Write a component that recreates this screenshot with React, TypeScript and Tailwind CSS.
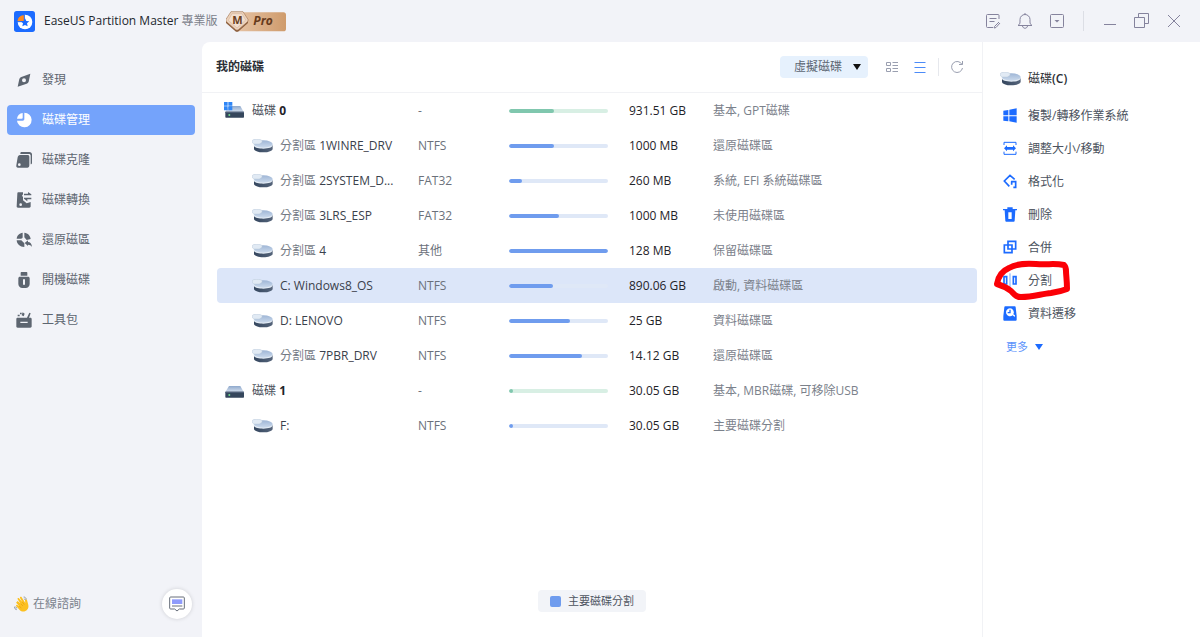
import { useState } from 'react';
import type { ReactNode } from 'react';
import clsx from 'clsx';

/* Disk icons */

function PartitionIcon() {
  return (
    <svg viewBox="0 0 63 42" className="h-[14px] w-[21px] shrink-0" aria-hidden="true">
      <defs>
        <linearGradient id="partTop" x1="0" y1="0" x2="0" y2="1">
          <stop offset="0" stopColor="#9fb6d6" />
          <stop offset="1" stopColor="#cbdaec" />
        </linearGradient>
        <linearGradient id="partSide" x1="0" y1="0" x2="1" y2="0">
          <stop offset="0" stopColor="#34465e" />
          <stop offset="1" stopColor="#56657b" />
        </linearGradient>
      </defs>
      <path d="M6 18v11c0 6 12 11 28 11s28-5 28-11V18z" fill="url(#partSide)" />
      <path d="M5 15v4c0 6 13 10 29 10s28-4 28-10v-4z" fill="#e4ecf5" />
      <ellipse cx="34" cy="15" rx="28" ry="11" fill="url(#partTop)" />
      <path d="M1 5c0-3 6-4 13-4s16 1 16 4v5l-8 5H6l-5-4z" fill="#e1eaf4" stroke="#b9c8da" strokeWidth="1.5" />
    </svg>
  );
}

function DriveIcon({ system }: { system?: boolean }) {
  return (
    <svg viewBox="0 0 60 54" className="h-[18px] w-5 shrink-0" aria-hidden="true">
      <defs>
        <linearGradient id="driveTop" x1="0" y1="0" x2="0" y2="1">
          <stop offset="0" stopColor="#8fa9cd" />
          <stop offset="1" stopColor="#d5e0ee" />
        </linearGradient>
      </defs>
      <path d="M15 12h34l10 18H4z" fill="url(#driveTop)" />
      <rect x="4" y="29" width="56" height="18" rx="2" fill="#35465c" />
      <rect x="4" y="29" width="56" height="3" fill="#5a6b83" />
      <circle cx="16" cy="39" r="3" fill="#6fdc8c" />
      {system && <path d="M0 0h11v11H0zM13 0h12v11H13zM0 13h11v12H0zM13 13h12v12H13z" fill="#2f86f6" />}
    </svg>
  );
}

/* Sidebar */

function NavIcon({ children }: { children: ReactNode }) {
  return (
    <svg viewBox="0 0 48 48" className="h-4 w-4 shrink-0" fill="currentColor" aria-hidden="true">
      {children}
    </svg>
  );
}

const navItems = [
  {
    label: '發現',
    icon: (
      <path
        fillRule="evenodd"
        d="M43 5 38 29c-1 3-3 5-6 6L5 44l5-23c1-3 3-5 6-6zM24 19a6 6 0 1 0 0 12 6 6 0 0 0 0-12z"
      />
    ),
  },
  {
    label: '磁碟管理',
    icon: (
      <>
        <path d="M25 2a22 22 0 1 1-22 24h17c3 0 5-2 5-5z" />
        <path d="M20 3v14c0 2-1 3-3 3H3C4 11 11 4 20 3z" />
      </>
    ),
  },
  {
    label: '磁碟克隆',
    icon: (
      <>
        <path d="M16 0h24c5 0 8 3 8 7v26c0 2-2 4-4 4V11c0-3-2-5-5-5H13c0-4 1-6 3-6z" />
        <path
          fillRule="evenodd"
          d="M12 9h22c4 0 6 2 6 6v25c0 4-2 7-6 7H6c-4 0-6-3-5-7l4-24c1-4 3-7 7-7zM10 34a4 4 0 1 0 0 8 4 4 0 0 0 0-8z"
        />
      </>
    ),
  },
  {
    label: '磁碟轉換',
    icon: (
      <>
        <path
          fillRule="evenodd"
          d="M8 1h13v6l-3 4 3 4v10l11 9 12-4v13c0 3-2 4-4 4H6c-3 0-4-1-4-4L4 5c0-3 1-4 4-4zM14 34a4 4 0 1 0 0 8 4 4 0 0 0 0-8z"
        />
        <path d="M24 5h12V0l10 7v3H24zM46 17H24v3l10 8v-6h12z" />
      </>
    ),
  },
  {
    label: '還原磁區',
    icon: (
      <>
        <path d="M20 2v13c0 3-2 5-5 5H2C3 11 10 3 20 2zM25 2c11 1 18 9 19 19l-12 3-7-8zM2 25h14l9 9v11C12 45 3 37 2 25z" />
        <path d="m26 33 10-8v5c7 0 11 5 12 15-3-5-7-7-12-7v4z" />
      </>
    ),
  },
  {
    label: '開機磁碟',
    icon: (
      <path
        fillRule="evenodd"
        d="M16 0h16c1 0 2 1 2 2v9H14V2c0-1 1-2 2-2zM12 14h24c3 0 5 2 5 5v17c0 7-5 12-12 12H19C12 48 7 43 7 36V19c0-3 2-5 5-5zm9 8v16h6V22z"
      />
    ),
  },
  {
    label: '工具包',
    icon: (
      <>
        <path
          fillRule="evenodd"
          d="M5 17h28l7-15 4 2-5 13h4c3 0 4 2 4 4v22c0 3-2 4-4 4H5c-3 0-4-1-4-4V21c0-2 1-4 4-4zm8 12v4h22v-4z"
        />
        <path d="M5 8h6v5H5zM12 2h5v5h-5zM20 1l6 4-3 8-6-3z" />
      </>
    ),
  },
];

function Sidebar() {
  const [active, setActive] = useState('磁碟管理');

  return (
    <aside className="flex w-[202px] shrink-0 flex-col justify-between">
      <nav className="flex flex-col gap-2.5 px-[7px] pt-[23px]">
        {navItems.map((item) => (
          <button
            key={item.label}
            onClick={() => setActive(item.label)}
            className={clsx(
              'flex h-[30px] items-center gap-2.5 rounded-[4px] px-[9px]',
              active === item.label ? 'bg-[#74a3fb] text-white' : 'text-[#5d6570]',
            )}
          >
            <NavIcon>{item.icon}</NavIcon>
            <span>{item.label}</span>
          </button>
        ))}
      </nav>

      <div className="flex items-center justify-between pr-2.5 pb-[18px] pl-3.5">
        <a href="#support" className="flex items-center gap-[3px] text-[#7b828d]">
          <svg viewBox="0 0 48 48" className="h-4 w-4" aria-hidden="true">
            <path
              d="m8 18 3-3 9 8-9-13c-2-3 2-6 4-3l10 11-7-12c-1-3 3-5 5-2l11 17-1-8c0-4 5-5 6-1l4 15c2 8-2 16-10 19-6 2-12 0-16-4L7 31c-3-3 1-6 3-4l6 4L7 21c-1-1 0-2 1-3z"
              fill="#fcc021"
            />
            <path d="m20 23 7 7m-2-12 6 8m-15 5 6 5" stroke="#e59d0c" strokeWidth="2" fill="none" />
            <path d="M29 3c4 0 7 3 8 7M31 8l3 4M1 32c0 5 3 8 7 9M5 32l3 5" stroke="#8d949e" strokeWidth="3" fill="none" />
          </svg>
          在線諮詢
        </a>
        <button
          aria-label="聊天"
          className="flex h-[30px] w-[30px] items-center justify-center rounded-full bg-white shadow-[0_0_4px_rgba(0,0,0,0.15)]"
        >
          <svg viewBox="0 0 48 48" className="h-4 w-4" fill="none" aria-hidden="true">
            <rect x="9" y="10" width="31" height="14" fill="#8f9bfb" />
            <path
              d="M5 3h38c2 0 3 1 3 3v30c0 2-1 3-3 3H31l-7 6-7-6H5c-2 0-3-1-3-3V6c0-2 1-3 3-3zM9 30h31"
              stroke="#686f7b"
              strokeWidth="3"
            />
          </svg>
        </button>
      </div>
    </aside>
  );
}

/* Title bar */

function WindowButton({ label, children }: { label: string; children: ReactNode }) {
  return (
    <button aria-label={label} className="flex h-6 w-8 items-center justify-center">
      <svg viewBox="0 0 16 16" className="h-4 w-4" fill="none" stroke="#85839d" aria-hidden="true">
        {children}
      </svg>
    </button>
  );
}

function TitleBar() {
  return (
    <header className="flex h-[42px] shrink-0 items-center justify-between pr-2.5 pl-3.5">
      <div className="flex items-center">
        <svg viewBox="0 0 63 63" className="h-[21px] w-[21px]" aria-hidden="true">
          <rect width="63" height="63" rx="8" fill="#1c6bff" />
          <circle cx="33" cy="33" r="22" fill="#fff" />
          <path d="M31 32H9c0-12 10-21 22-21z" fill="#ff8a1e" stroke="#1c6bff" strokeWidth="3" />
          <path d="m33 22 4 8 9 1-7 6 2 9-8-4-8 4 2-9-7-6 9-1z" fill="#1c6bff" />
        </svg>
        <h1 className="ml-[9px] font-medium text-[#23272e]">
          EaseUS Partition Master <span className="font-normal text-[#7b808a]">專業版</span>
        </h1>
        <div className="ml-2 flex items-center" aria-label="Pro">
          <svg viewBox="0 0 180 63" className="h-[21px] w-[60px]" aria-hidden="true">
            <defs>
              <linearGradient id="badge" x1="0" y1="0" x2="1" y2="0">
                <stop offset="0" stopColor="#e6c3a5" />
                <stop offset="1" stopColor="#cf9b6c" />
              </linearGradient>
            </defs>
            <path d="M30 4h143c4 0 7 3 7 7v43c0 4-3 7-7 7H30z" fill="url(#badge)" />
            <path d="M16 8h34l16 21v7L36 62h-6L0 36v-7z" fill="#8a5c3c" />
            <path d="M15 2h36l15 23v6L36 57h-6L0 31v-6z" fill="#ecd2bd" stroke="#a77b59" strokeWidth="2" />
            <path d="M18 8h30l11 19-26 24L7 28z" fill="#f3dfcf" stroke="#c49a79" strokeWidth="1" />
            <text x="34" y="38" textAnchor="middle" fontSize="33" fontWeight="700" fill="#6b3f22">
              M
            </text>
            <text x="82" y="43" fontSize="36" fontWeight="700" fontStyle="italic" fill="#663b1d">
              Pro
            </text>
          </svg>
        </div>
      </div>

      <div className="flex items-center">
        <WindowButton label="意見">
          <path d="M14 6V2.500a1 1 0 0 0-1-1H2.500a1 1 0 0 0-1 1v11a1 1 0 0 0 1 1H8M4.500 5.500h7M4.500 8.500h5" />
          <path d="m14 9-4.500 4.500-.5 1.500 2-.5L15 10" />
        </WindowButton>
        <WindowButton label="通知">
          <path d="M1 12.500h14c-1.500-1-2-2-2-3.500V6.500a5 5 0 0 0-10 0V9c0 1.500-.5 2.500-2 3.500zM8 1.500V0M5.500 13c.5 3 4.500 3 5 0" />
        </WindowButton>
        <WindowButton label="選單">
          <rect x="1.500" y="1.500" width="13" height="13" rx="1" />
          <path d="M5.500 7h5L8 9.500z" fill="#85839d" stroke="none" />
        </WindowButton>
        <span className="mx-2.5 h-5 w-px bg-[#dcdee5]" />
        <WindowButton label="最小化">
          <path d="M2 11.500h12" />
        </WindowButton>
        <WindowButton label="還原視窗">
          <path d="M.5 4.500h10v10H.5zM4.500 4V.5h10v10H11" />
        </WindowButton>
        <WindowButton label="關閉">
          <path d="m2 2 12 12M14 2 2 14" />
        </WindowButton>
      </div>
    </header>
  );
}

/* Disk list */

type Row = {
  disk?: boolean;
  system?: boolean;
  selected?: boolean;
  cjk?: string;
  name: string;
  fs: string;
  used: number;
  size: string;
  note: string;
};

const rows: Row[] = [
  { disk: true, system: true, cjk: '磁碟', name: '0', fs: '-', used: 45, size: '931.51 GB', note: '基本, GPT磁碟' },
  { cjk: '分割區', name: '1WINRE_DRV', fs: 'NTFS', used: 45, size: '1000 MB', note: '還原磁碟區' },
  { cjk: '分割區', name: '2SYSTEM_D...', fs: 'FAT32', used: 13, size: '260 MB', note: '系統, EFI 系統磁碟區' },
  { cjk: '分割區', name: '3LRS_ESP', fs: 'FAT32', used: 50, size: '1000 MB', note: '未使用磁碟區' },
  { cjk: '分割區', name: '4', fs: '其他', used: 100, size: '128 MB', note: '保留磁碟區' },
  { name: 'C: Windows8_OS', fs: 'NTFS', used: 44, size: '890.06 GB', note: '啟動, 資料磁碟區', selected: true },
  { name: 'D: LENOVO', fs: 'NTFS', used: 62, size: '25 GB', note: '資料磁碟區' },
  { cjk: '分割區', name: '7PBR_DRV', fs: 'NTFS', used: 74, size: '14.12 GB', note: '還原磁碟區' },
  { disk: true, cjk: '磁碟', name: '1', fs: '-', used: 4, size: '30.05 GB', note: '基本, MBR磁碟, 可移除USB' },
  { name: 'F:', fs: 'NTFS', used: 4, size: '30.05 GB', note: '主要磁碟分割' },
];

function UsageBar({ used, disk }: { used: number; disk?: boolean }) {
  return (
    <div className={clsx('h-1 w-[99px] overflow-hidden rounded-full', disk ? 'bg-[#d8efe4]' : 'bg-[#dfe8f7]')}>
      <div
        className={clsx('h-full rounded-full', disk ? 'bg-[#80c7ae]' : 'bg-[#6f9cee]')}
        style={{ width: `${used}%` }}
      />
    </div>
  );
}

function DiskList() {
  return (
    <main className="flex min-w-0 flex-1 flex-col rounded-tl-lg bg-white">
      <div className="flex h-[51px] items-center justify-between border-b border-[#f1f2f5] pr-[18px] pl-3.5">
        <h2 className="font-semibold text-[#2b2f36]">我的磁碟</h2>
        <div className="flex items-center">
          <div className="relative mr-[17px]">
            <select
              aria-label="磁碟類型"
              className="h-[22px] w-[88px] appearance-none rounded-[4px] bg-[#e6f1fd] pl-3.5 text-[#5c6672]"
            >
              <option>虛擬磁碟</option>
            </select>
            <svg viewBox="0 0 8 6" className="pointer-events-none absolute top-2 right-[7px] h-1.5 w-2" aria-hidden="true">
              <path d="M0 0h8L4 6z" fill="#111" />
            </svg>
          </div>
          <button aria-label="詳細檢視" className="flex h-[22px] w-[14px] items-center justify-center">
            <svg viewBox="0 0 12 12" className="h-3 w-3" fill="none" stroke="#9a9fb0" aria-hidden="true">
              <path d="M.5 1.500h4v3h-4zM.5 7.500h4v3h-4zM6.500 1.500H12M6.500 4.500H12M6.500 7.500H12M6.500 10.500H12" />
            </svg>
          </button>
          <button aria-label="清單檢視" className="ml-3.5 flex h-[22px] w-[14px] items-center justify-center">
            <svg viewBox="0 0 12 12" className="h-3 w-3" fill="none" stroke="#4b8bf8" aria-hidden="true">
              <path d="M.5 1.500h11M.5 6.500h11M.5 11.500h11" />
            </svg>
          </button>
          <span className="mx-[11px] h-[18px] w-px bg-[#e6e8ed]" />
          <button aria-label="重新整理" className="flex h-[22px] w-[14px] items-center justify-center">
            <svg viewBox="0 0 14 14" className="h-3.5 w-3.5" fill="none" stroke="#9a9fb0" aria-hidden="true">
              <path d="M12 4.500A5.500 5.500 0 1 0 12.500 8M12.500 1v3.500H9" />
            </svg>
          </button>
        </div>
      </div>

      <div className="flex-1 pr-[5px] pl-[15px]">
        <table className="w-full table-fixed">
          <colgroup>
            <col className="w-[201px]" />
            <col className="w-[91px]" />
            <col className="w-[120px]" />
            <col className="w-[84px]" />
            <col />
          </colgroup>
          <tbody>
            {rows.map((row) => (
              <tr key={row.name} className="h-[35px]">
                <td className={clsx('rounded-l-[4px]', row.selected && 'bg-[#dce6f9]')}>
                  <div className={clsx('flex items-center', row.disk ? 'gap-2 pl-[7px]' : 'gap-[7px] pl-[35px]')}>
                    {row.disk ? <DriveIcon system={row.system} /> : <PartitionIcon />}
                    <span className="whitespace-nowrap text-[#3a414c]">
                      {row.cjk && <span className={row.disk ? 'text-[#4a515c]' : 'text-[#747a84]'}>{row.cjk} </span>}
                      <span className={clsx(row.disk && 'font-bold text-[#1f2329]')}>{row.name}</span>
                    </span>
                  </div>
                </td>
                <td className={clsx('text-[#6b717b]', row.selected && 'bg-[#dce6f9]')}>{row.fs}</td>
                <td className={clsx(row.selected && 'bg-[#dce6f9]')}>
                  <UsageBar used={row.used} disk={row.disk} />
                </td>
                <td className={clsx('whitespace-nowrap text-[#1f2329]', row.selected && 'bg-[#dce6f9]')}>{row.size}</td>
                <td
                  className={clsx(
                    'rounded-r-[4px] whitespace-nowrap text-[#7b818b]',
                    row.selected && 'bg-[#dce6f9]',
                  )}
                >
                  {row.note}
                </td>
              </tr>
            ))}
          </tbody>
        </table>
      </div>

      <div className="flex justify-center pb-[25px]">
        <div className="flex h-[22px] items-center gap-[7px] rounded-[4px] bg-[#f2f4f8] px-3 text-[11px] text-[#4c535e]">
          <span className="h-[11px] w-[11px] rounded-[2px] bg-[#6f9cee]" />
          主要磁碟分割
        </div>
      </div>
    </main>
  );
}

/* Action panel */

const actions = [
  {
    label: '複製/轉移作業系統',
    icon: <path d="M1 8l15-2v16H1zM19 5l22-4v21H19zM1 25h15v15L1 38zM19 25h22v19l-22-4z" fill="currentColor" />,
  },
  {
    label: '調整大小/移動',
    icon: (
      <>
        <path d="M3 12V4h36v8M3 32v8h36v-8" fill="none" stroke="currentColor" strokeWidth="3" />
        <path d="m3 22 9-9v5h18v-5l9 9-9 9v-5H12v5z" fill="currentColor" />
      </>
    ),
  },
  {
    label: '格式化',
    icon: (
      <path d="M35 16 21 4 4 21l15 16M24 23h14v17h-7M26 22v10" fill="none" stroke="currentColor" strokeWidth="5" />
    ),
  },
  {
    label: '刪除',
    icon: (
      <path
        fillRule="evenodd"
        d="M13 1h16v5h13v4h-5l-2 31c0 2-1 3-3 3H10c-2 0-3-1-3-3L5 10H0V6h13zm3 15v20h10V16z"
        fill="currentColor"
      />
    ),
  },
  {
    label: '合併',
    icon: <path d="M15 4h23v23H15zM4 15h23v23H4z" fill="none" stroke="currentColor" strokeWidth="5" />,
  },
  {
    label: '分割',
    marked: true,
    icon: (
      <>
        <path d="M3 11h8v22H3zM31 11h8v22h-8z" fill="none" stroke="currentColor" strokeWidth="5" />
        <path d="M21 1v43" stroke="#7aa9fb" strokeWidth="3" />
      </>
    ),
  },
  {
    label: '資料遷移',
    icon: (
      <path
        fillRule="evenodd"
        d="M7 1h28c2 0 3 1 3 3l3 26v11c0 2-1 3-3 3H4c-2 0-3-1-3-3V30L4 4c0-2 1-3 3-3zm14 6a12 12 0 1 0 8 21l6 5 1-5-5-3A12 12 0 0 0 21 7zm-2 4h4v11h-9v-4h5z"
        fill="currentColor"
      />
    ),
  },
];

function ActionPanel() {
  return (
    <aside className="w-[218px] shrink-0 border-l border-[#f1f2f5] bg-white pt-[17px] pl-[17px]">
      <h2 className="flex h-10 items-center gap-[7px] text-[#2b2f36]">
        <PartitionIcon />
        <span>
          磁碟<span className="font-semibold">(C)</span>
        </span>
      </h2>
      <ul>
        {actions.map((action) => (
          <li key={action.label} className="relative">
            <button className="flex h-[33px] w-full items-center gap-[11px] pl-[3px] text-[#4c535e]">
              <svg viewBox="0 0 42 45" className="h-[15px] w-[14px] shrink-0 text-[#1c6bff]" aria-hidden="true">
                {action.icon}
              </svg>
              {action.label}
            </button>
            {action.marked && (
              <svg
                viewBox="0 0 80 42"
                className="pointer-events-none absolute -top-1 -left-2 h-[42px] w-20"
                aria-hidden="true"
              >
                <path
                  d="M72 5C62 3 56 5 44 4 32 3 24 4 17 8 10 11 6 17 5 24c7 2 9 3 14 7 4 4 5 6 10 6 12 0 20-3 30-4 7-1 11-2 16-4 0-9-1-14-1-18 0-3-1-5-2-6z"
                  fill="none"
                  stroke="#fb0007"
                  strokeWidth="6"
                  strokeLinejoin="round"
                />
              </svg>
            )}
          </li>
        ))}
      </ul>
      <button className="flex h-[33px] items-center gap-[7px] pl-1.5 text-[11px] text-[#5b93fb]">
        更多
        <svg viewBox="0 0 8 6" className="h-1.5 w-2" aria-hidden="true">
          <path d="M0 0h8L4 6z" fill="#1c6bff" />
        </svg>
      </button>
    </aside>
  );
}

export default function App() {
  return (
    <div className="flex min-h-screen flex-col bg-[#f2f3f8] font-['Open_Sans','Noto_Sans_CJK_TC',sans-serif] text-[12px] leading-4">
      <TitleBar />
      <div className="flex flex-1">
        <Sidebar />
        <DiskList />
        <ActionPanel />
      </div>
    </div>
  );
}
